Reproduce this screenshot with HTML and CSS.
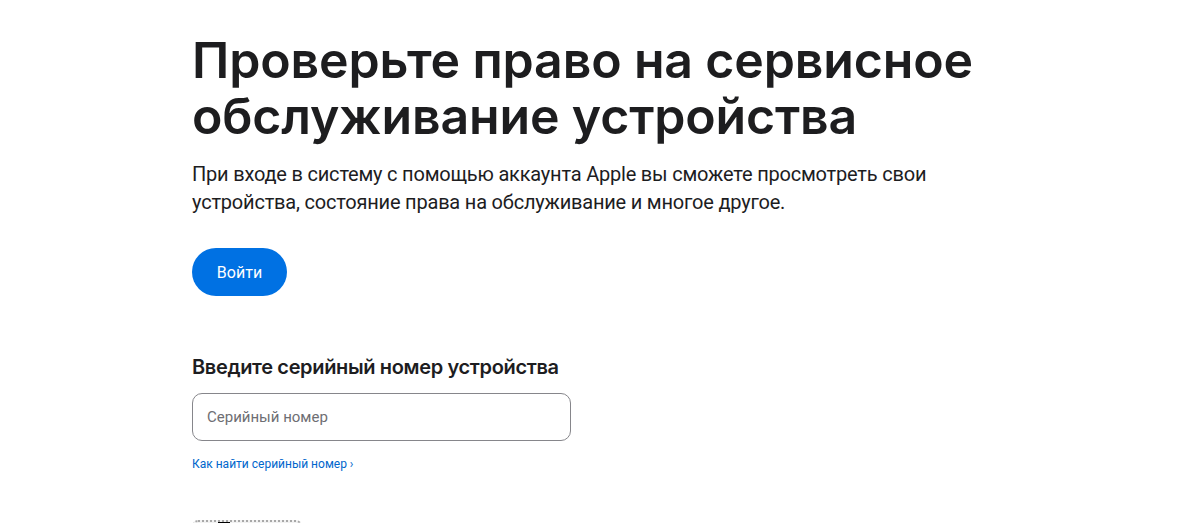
FILE: index.html
```html
<!DOCTYPE html>
<html lang="ru">
<head>
<meta charset="utf-8">
<title>Проверка права на обслуживание</title>
<link rel="stylesheet" href="styles.css">
</head>
<body>
<main class="page">
  <h1 class="title">Проверьте право на сервисное обслуживание устройства</h1>
  <p class="intro">При входе в систему с помощью аккаунта Apple вы сможете просмотреть свои устройства, состояние права на обслуживание и многое другое.</p>
  <button class="signin" type="button">Войти</button>
  <h2 class="subtitle">Введите серийный номер устройства</h2>
  <div class="field"><input class="serial" type="text" placeholder="Серийный номер"></div>
  <a class="help" href="#">Как найти серийный номер ›</a>
  <div class="captcha"><span class="captcha-mark"></span></div>
</main>
</body>
</html>
```
FILE: styles.css
```css
html, body { margin: 0; padding: 0; background: #fff; }
body { font-family: Roboto, "Noto Sans", sans-serif; color: #1d1d1f; overflow: hidden; height: 523px; }
.page { width: 816px; margin: 0 auto; padding-top: 32px; display: flex; flex-direction: column; align-items: flex-start; }
.title { font-family: Inter, Roboto, sans-serif; font-size: 50px; line-height: 56px; font-weight: 600; letter-spacing: -0.15px; margin: 0; color: #1d1d1f; }
.intro { font-size: 20px; line-height: 28px; letter-spacing: -0.2px; margin: 16px 0 0; color: #1d1d1f; }
.signin { margin-top: 32px; width: 95px; height: 48px; border: 0; border-radius: 24px; background: #0071e3; color: #fff; font-family: Roboto, sans-serif; font-size: 16px; padding: 0; }
.subtitle { font-family: Inter, Roboto, sans-serif; font-size: 20px; line-height: 24px; font-weight: 600; letter-spacing: -0.35px; margin: 59px 0 0; }
.field { margin-top: 14px; }
.serial { box-sizing: border-box; width: 379px; height: 48px; border: 1px solid #86868b; border-radius: 10px; padding: 0 14px; font-family: Roboto, sans-serif; font-size: 15px; color: #1d1d1f; outline: none; }
.serial::placeholder { color: #6e6e73; }
.help { margin-top: 15px; font-size: 12px; line-height: 16px; color: #0066cc; text-decoration: none; }
.captcha { margin-top: 48px; width: 106px; height: 40px; border: 2px dotted #a8a8a8; border-radius: 6px; position: relative; flex-shrink: 0; background: #f2f2f2; }
.captcha-mark { position: absolute; left: 24px; top: 0; width: 12px; height: 6px; background: #000; }
```
